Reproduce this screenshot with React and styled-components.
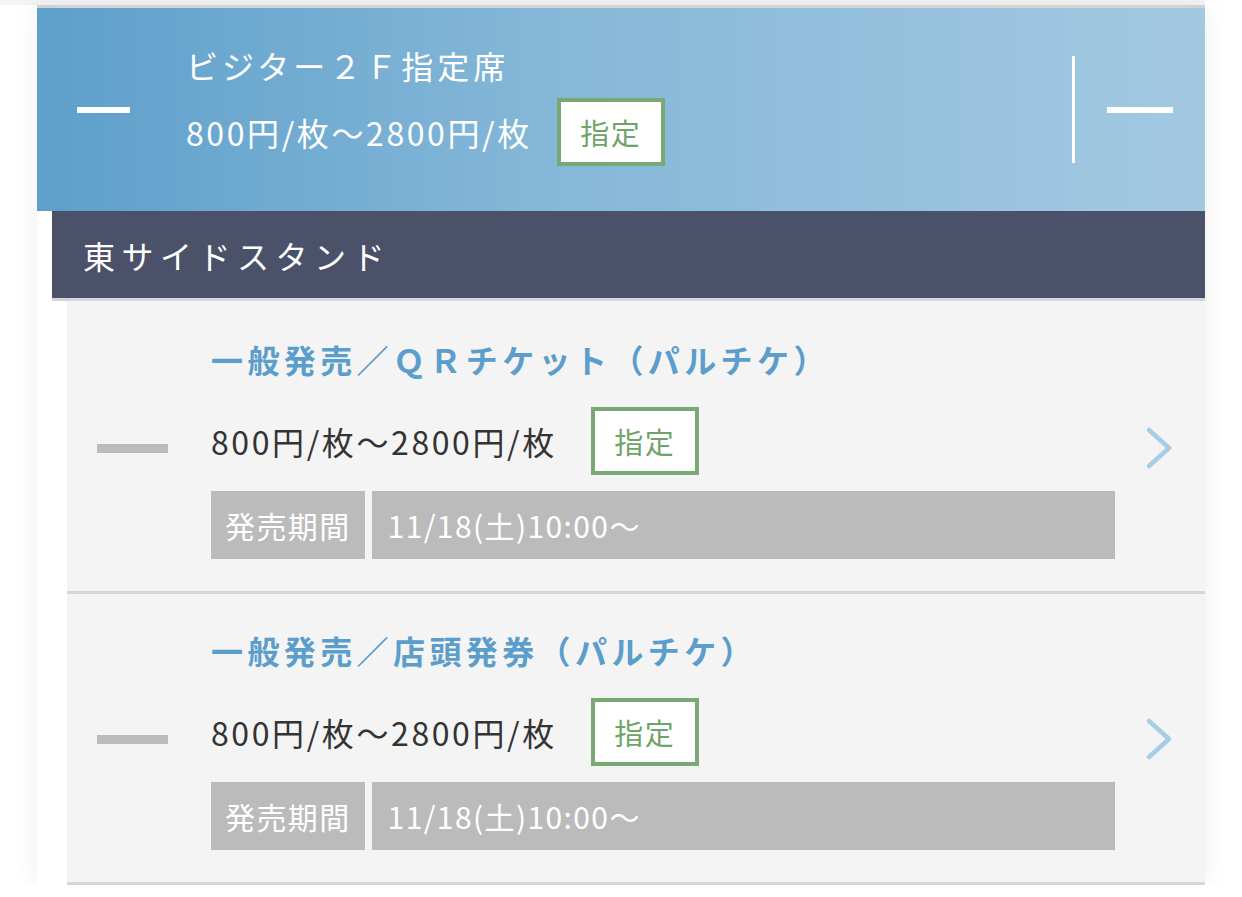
import React from 'react';
import styled, { createGlobalStyle } from 'styled-components';

const GlobalStyle = createGlobalStyle`
  body {
    margin: 0;
    background: #fff;
    font-family: 'Noto Sans CJK JP', 'Noto Sans', sans-serif;
  }
`;

const TopEdge = styled.div`
  height: 5px;
  width: 1205px;
  background: #f4f4f4;
`;

const Panel = styled.div`
  margin-left: 37px;
  width: 1168px;
  border-top: 3px solid #d2d2d2;
  box-shadow: 0 0 24px rgba(0, 0, 0, 0.07);
`;

const Header = styled.div`
  box-sizing: border-box;
  height: 203px;
  padding-bottom: 6px;
  display: flex;
  align-items: center;
  background: linear-gradient(90deg, #5e9fcb 0%, #86b8d8 45%, #a3c9e1 100%);
  color: #fff;
`;

const Minus = styled.span`
  display: block;
  flex: none;
  width: ${p => p.w}px;
  height: ${p => p.h}px;
  background: ${p => p.color};
  margin-left: ${p => p.left || 0}px;
  margin-top: ${p => p.top || 0}px;
`;

const Info = styled.div`
  flex: 1;
  display: flex;
  flex-direction: column;
  margin-left: 56px;
`;

const HeadTitle = styled.div`
  font-size: 32px;
  letter-spacing: 4px;
  line-height: 36px;
  margin-bottom: 15px;
`;

const PriceRow = styled.div`
  display: flex;
  align-items: center;
  gap: ${p => p.gap}px;
`;

const Price = styled.span`
  font-size: 32px;
  letter-spacing: 2.6px;
  color: ${p => p.color};
`;

const Badge = styled.span`
  box-sizing: border-box;
  width: 108px;
  height: 68px;
  display: flex;
  align-items: center;
  justify-content: center;
  background: #fff;
  border: 4px solid #7aa874;
  color: #6fa468;
  font-size: 29px;
  letter-spacing: 0.05em;
`;

const Divider = styled.span`
  width: 3px;
  height: 107px;
  background: #fff;
  margin-right: 32px;
`;

const HeadRight = styled.div`
  display: flex;
  align-items: center;
  margin-right: 32px;
  margin-top: 6px;
`;

const SectionBar = styled.div`
  margin-left: 15px;
  height: 87px;
  display: flex;
  align-items: center;
  padding-left: 31px;
  background: #4a5169;
  color: #fff;
  font-size: 32px;
  letter-spacing: 6.5px;
  border-bottom: 3px solid #d2d5da;
`;

const List = styled.ul`
  list-style: none;
  margin: 0 0 0 30px;
  padding: 0;
  background: #f4f4f4;
`;

const Item = styled.li`
  display: grid;
  grid-template-columns: 144px 904px 1fr;
  align-items: center;
  padding: 34px 0 32px;
  border-bottom: 3px solid #d6d6d6;
  &:first-child {
    padding-top: 36px;
  }
`;

const MinusCell = styled.div`
  padding-left: 30px;
`;

const Body = styled.div`
  display: flex;
  flex-direction: column;
`;

const ItemTitle = styled.div`
  font-size: 32px;
  font-weight: 700;
  color: #5b9dcb;
  letter-spacing: 4.4px;
  line-height: 44px;
  margin-bottom: 26px;
`;

const Period = styled.div`
  display: flex;
  gap: 7px;
  margin-top: 16px;
  height: 68px;
`;

const PeriodCell = styled.div`
  display: flex;
  align-items: center;
  background: #bbb;
  color: #fff;
  font-size: 30px;
  letter-spacing: 1.4px;
  padding: 0 ${p => (p.grow ? 16 : 14)}px;
  flex: ${p => (p.grow ? 1 : 'none')};
`;

const Chevron = styled.div`
  display: flex;
  padding-left: 30px;
`;

const tickets = [
  { title: '一般発売／ＱＲチケット（パルチケ）' },
  { title: '一般発売／店頭発券（パルチケ）' },
];

const PRICE = '800円/枚〜2800円/枚';

export default function App() {
  return (
    <>
      <GlobalStyle />
      <TopEdge />
      <Panel>
        <Header>
          <Minus w={53} h={6} color="#fff" left={40} top={6} />
          <Info>
            <HeadTitle>ビジター２Ｆ指定席</HeadTitle>
            <PriceRow gap={25}>
              <Price color="#fff">{PRICE}</Price>
              <Badge>指定</Badge>
            </PriceRow>
          </Info>
          <HeadRight>
            <Divider />
            <Minus w={66} h={6} color="#fff" />
          </HeadRight>
        </Header>
        <SectionBar>東サイドスタンド</SectionBar>
        <List>
          {tickets.map(t => (
            <Item key={t.title}>
              <MinusCell>
                <Minus w={71} h={9} color="#bbb" />
              </MinusCell>
              <Body>
                <ItemTitle>{t.title}</ItemTitle>
                <PriceRow gap={34}>
                  <Price color="#333">{PRICE}</Price>
                  <Badge>指定</Badge>
                </PriceRow>
                <Period>
                  <PeriodCell>発売期間</PeriodCell>
                  <PeriodCell grow>11/18(土)10:00〜</PeriodCell>
                </Period>
              </Body>
              <Chevron>
                <svg width="30" height="44" viewBox="0 0 30 44">
                  <path d="M4 4 L24 22 L4 40" fill="none" stroke="#a7cde5" strokeWidth="4.5" strokeLinecap="round" strokeLinejoin="round" />
                </svg>
              </Chevron>
            </Item>
          ))}
        </List>
      </Panel>
    </>
  );
}
